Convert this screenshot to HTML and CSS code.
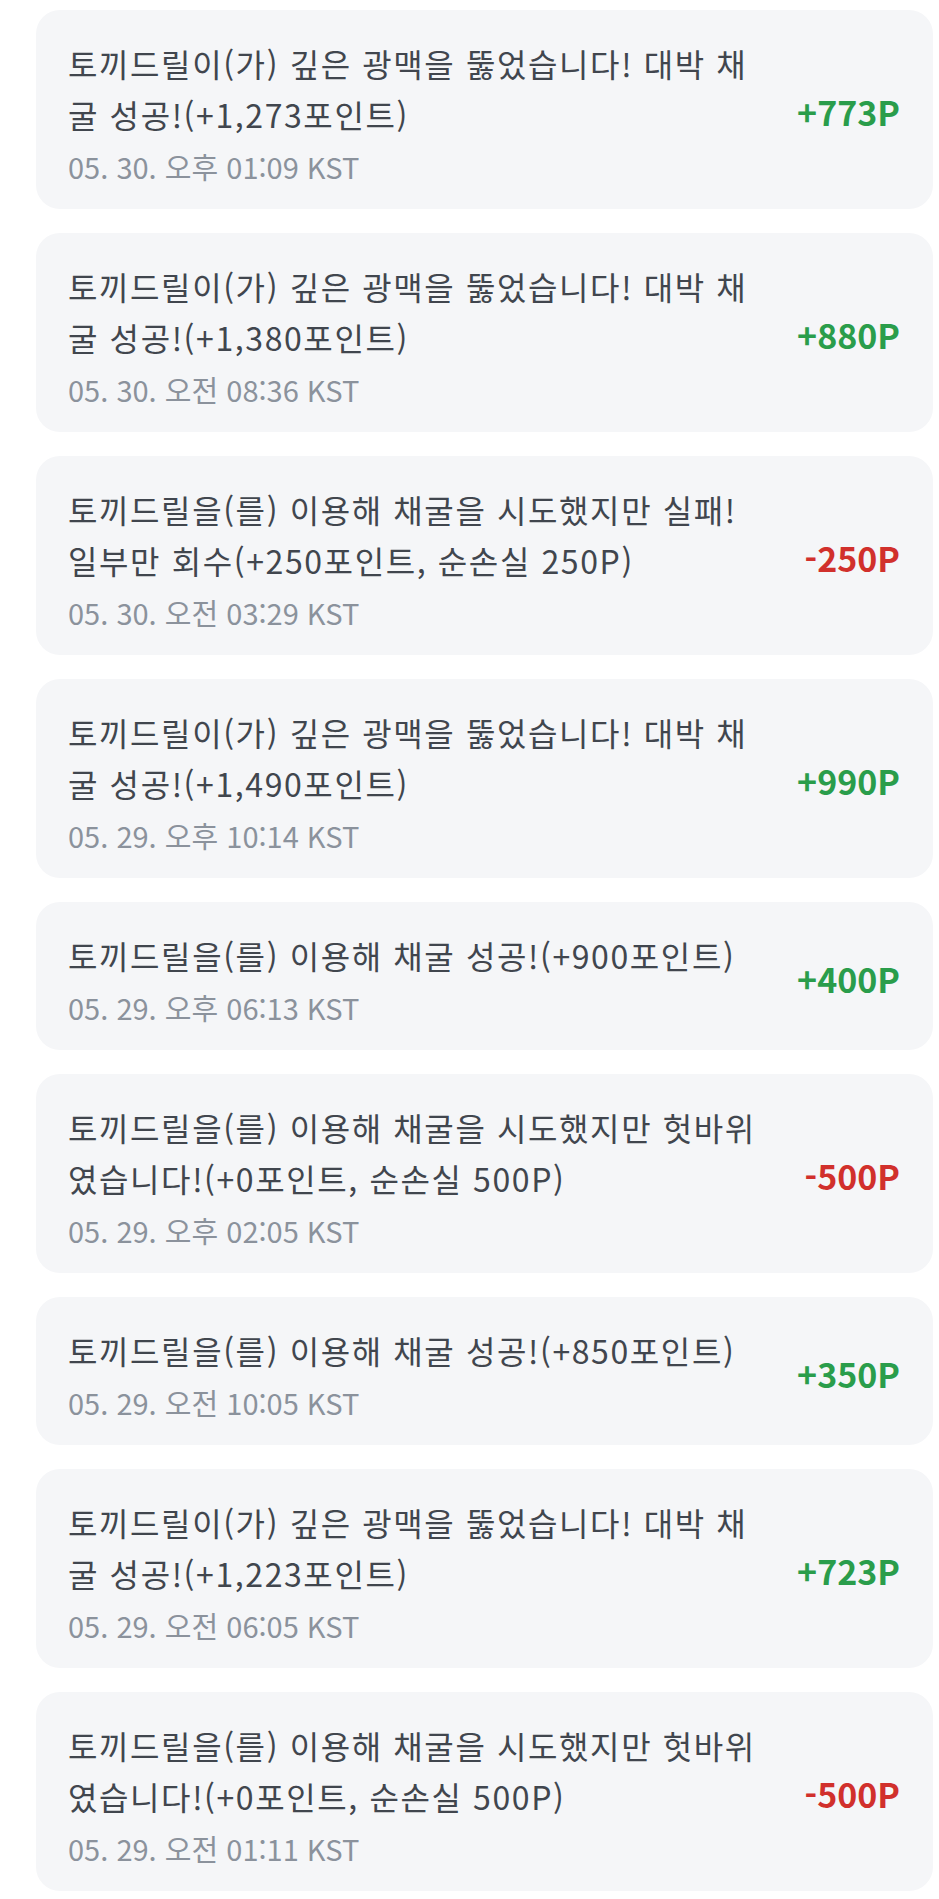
FILE: index.html
```html
<!DOCTYPE html>
<html lang="ko">
<head>
<meta charset="utf-8">
<title>채굴 내역</title>
<link rel="stylesheet" href="styles.css">
</head>
<body>
<ul class="history">
  <li class="item">
    <div class="info">
      <p class="desc">토끼드릴이(가) 깊은 광맥을 뚫었습니다! 대박 채굴 성공!(+1,273포인트)</p>
      <p class="date">05. 30. 오후 01:09 KST</p>
    </div>
    <span class="amount plus">+773P</span>
  </li>
  <li class="item">
    <div class="info">
      <p class="desc">토끼드릴이(가) 깊은 광맥을 뚫었습니다! 대박 채굴 성공!(+1,380포인트)</p>
      <p class="date">05. 30. 오전 08:36 KST</p>
    </div>
    <span class="amount plus">+880P</span>
  </li>
  <li class="item">
    <div class="info">
      <p class="desc">토끼드릴을(를) 이용해 채굴을 시도했지만 실패! 일부만 회수(+250포인트, 순손실 250P)</p>
      <p class="date">05. 30. 오전 03:29 KST</p>
    </div>
    <span class="amount minus">-250P</span>
  </li>
  <li class="item">
    <div class="info">
      <p class="desc">토끼드릴이(가) 깊은 광맥을 뚫었습니다! 대박 채굴 성공!(+1,490포인트)</p>
      <p class="date">05. 29. 오후 10:14 KST</p>
    </div>
    <span class="amount plus">+990P</span>
  </li>
  <li class="item">
    <div class="info">
      <p class="desc">토끼드릴을(를) 이용해 채굴 성공!(+900포인트)</p>
      <p class="date">05. 29. 오후 06:13 KST</p>
    </div>
    <span class="amount plus">+400P</span>
  </li>
  <li class="item">
    <div class="info">
      <p class="desc">토끼드릴을(를) 이용해 채굴을 시도했지만 헛바위였습니다!(+0포인트, 순손실 500P)</p>
      <p class="date">05. 29. 오후 02:05 KST</p>
    </div>
    <span class="amount minus">-500P</span>
  </li>
  <li class="item">
    <div class="info">
      <p class="desc">토끼드릴을(를) 이용해 채굴 성공!(+850포인트)</p>
      <p class="date">05. 29. 오전 10:05 KST</p>
    </div>
    <span class="amount plus">+350P</span>
  </li>
  <li class="item">
    <div class="info">
      <p class="desc">토끼드릴이(가) 깊은 광맥을 뚫었습니다! 대박 채굴 성공!(+1,223포인트)</p>
      <p class="date">05. 29. 오전 06:05 KST</p>
    </div>
    <span class="amount plus">+723P</span>
  </li>
  <li class="item">
    <div class="info">
      <p class="desc">토끼드릴을(를) 이용해 채굴을 시도했지만 헛바위였습니다!(+0포인트, 순손실 500P)</p>
      <p class="date">05. 29. 오전 01:11 KST</p>
    </div>
    <span class="amount minus">-500P</span>
  </li>
</ul>
</body>
</html>
```

FILE: styles.css
```css
html, body {
  margin: 0;
  padding: 0;
  background: #ffffff;
}

body {
  font-family: "Noto Sans CJK KR", "Noto Sans", sans-serif;
}

.history {
  list-style: none;
  margin: 0;
  padding: 10px 6px 20px 36px;
  display: flex;
  flex-direction: column;
  gap: 24px;
}

.item {
  display: flex;
  align-items: center;
  background: #f5f6f8;
  border-radius: 24px;
  padding: 28px 33px 23px 32px;
}

.info {
  flex: 1 1 auto;
  min-width: 0;
}

.desc {
  margin: 0;
  font-size: 32px;
  line-height: 51px;
  letter-spacing: 1.6px;
  color: #41464e;
}

.date {
  margin: 6px 0 0;
  font-size: 29px;
  line-height: 40px;
  color: #8b929c;
}

.amount {
  flex: 0 0 auto;
  min-width: 132px;
  text-align: right;
  font-size: 34px;
  font-weight: 700;
  line-height: 40px;
}

.plus {
  color: #2a9d4b;
}

.minus {
  color: #d1302c;
}
```
